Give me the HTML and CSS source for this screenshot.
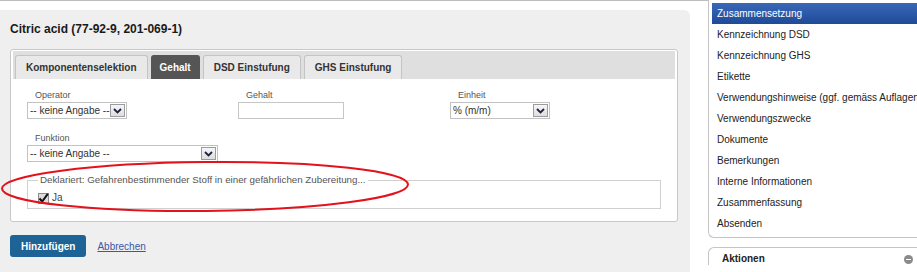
FILE: index.html
```html
<!DOCTYPE html>
<html lang="de">
<head>
  <meta charset="UTF-8">
  <title>Komponente bearbeiten</title>
  <link rel="stylesheet" href="styles.css">
</head>
<body>

  <div class="page">
    <div class="main">
      <div class="panel">
        <h1 class="title">Citric acid (77-92-9, 201-069-1)</h1>

        <div class="tabbox">
          <ul class="tabs">
            <li class="tab">Komponentenselektion</li>
            <li class="tab active">Gehalt</li>
            <li class="tab">DSD Einstufung</li>
            <li class="tab">GHS Einstufung</li>
          </ul>

          <div class="tab-content">
            <div class="fields">
              <div class="field">
                <label>Operator</label>
                <div class="select select-small">
                  <span class="select-text">-- keine Angabe --</span>
                  <span class="select-btn">
                    <svg width="9" height="6" viewBox="0 0 9 6"><path d="M1 1 L4.5 4.5 L8 1" fill="none" stroke="#1b2340" stroke-width="1.8"/></svg>
                  </span>
                </div>
              </div>
              <div class="field">
                <label>Gehalt</label>
                <input type="text" class="text-input">
              </div>
              <div class="field">
                <label>Einheit</label>
                <div class="select select-small">
                  <span class="select-text">% (m/m)</span>
                  <span class="select-btn">
                    <svg width="9" height="6" viewBox="0 0 9 6"><path d="M1 1 L4.5 4.5 L8 1" fill="none" stroke="#1b2340" stroke-width="1.8"/></svg>
                  </span>
                </div>
              </div>
            </div>

            <div class="field field-row">
              <label>Funktion</label>
              <div class="select select-wide">
                <span class="select-text">-- keine Angabe --</span>
                <span class="select-btn">
                  <svg width="9" height="6" viewBox="0 0 9 6"><path d="M1 1 L4.5 4.5 L8 1" fill="none" stroke="#1b2340" stroke-width="1.8"/></svg>
                </span>
              </div>
            </div>

            <fieldset class="declared">
              <legend>Deklariert: Gefahrenbestimmender Stoff in einer gefährlichen Zubereitung...</legend>
              <label class="check">
                <svg width="11" height="11" viewBox="0 0 11 11"><rect x="0.5" y="0.5" width="10" height="10" fill="#dcdcdc" stroke="#8a8a8a"/><path d="M1.5 5.5 L4.2 8.5 L9.8 0.8" fill="none" stroke="#111" stroke-width="2"/></svg>
                Ja
              </label>
            </fieldset>
          </div>
        </div>

        <div class="actions">
          <button class="btn-primary">Hinzufügen</button>
          <a href="#" class="link">Abbrechen</a>
        </div>
      </div>

      <!-- Markierung -->
      <svg class="annotation" width="420" height="60" viewBox="0 155 420 60">
        <ellipse cx="205" cy="185.5" rx="203" ry="24.5" fill="none" stroke="#e3121b" stroke-width="2" transform="rotate(-0.6 205 185.5)"/>
      </svg>
    </div>

    <div class="side">
      <ul class="nav">
        <li class="nav-item active">Zusammensetzung</li>
        <li class="nav-item">Kennzeichnung DSD</li>
        <li class="nav-item">Kennzeichnung GHS</li>
        <li class="nav-item">Etikette</li>
        <li class="nav-item">Verwendungshinweise (ggf. gemäss Auflagen)</li>
        <li class="nav-item">Verwendungszwecke</li>
        <li class="nav-item">Dokumente</li>
        <li class="nav-item">Bemerkungen</li>
        <li class="nav-item">Interne Informationen</li>
        <li class="nav-item">Zusammenfassung</li>
        <li class="nav-item">Absenden</li>
      </ul>

      <div class="box">
        <div class="box-head">
          <span>Aktionen</span>
          <span class="toggle"></span>
        </div>
      </div>
    </div>
  </div>

</body>
</html>
```

FILE: styles.css
```css
body {
  margin: 0;
  font-family: 'Liberation Sans', Arial, sans-serif;
  background-color: #fff;
  color: #222;
  width: 917px;
  height: 272px;
  overflow: hidden;
}

.page {
  display: flex;
  width: 1000px;
}

.main {
  position: relative;
  width: 708px;
  flex-shrink: 0;
  border-top: 1px solid #bdbdbd;
  padding-top: 9px;
}

.panel {
  width: 690px;
  box-sizing: border-box;
  background-color: #efefef;
  border-top-right-radius: 6px;
  padding: 12px 12px 20px 10px;
}

.title {
  margin: 0 0 13px 0;
  font-size: 12px;
  line-height: 14px;
  font-weight: bold;
  color: #1a1a1a;
}

.tabbox {
  background-color: #fff;
  border: 1px solid #c8c8c8;
  border-radius: 3px;
  padding: 1px 2px 2px 2px;
}

.tabs {
  list-style: none;
  margin: 0;
  padding: 4px 0 0 2px;
  height: 24px;
  background-color: #dfdfdf;
  display: flex;
  gap: 3px;
}

.tab {
  background-color: #e9e9e9;
  border: 1px solid #c4c4c4;
  border-bottom: none;
  border-radius: 3px 3px 0 0;
  padding: 0 10px;
  font-size: 10px;
  font-weight: bold;
  line-height: 23px;
  color: #333;
}

.tab.active {
  background-color: #555;
  border-color: #555;
  color: #fff;
  padding: 0 8px;
}

.tab-content {
  padding: 10px 14px 10px 14px;
}

.fields {
  display: grid;
  grid-template-columns: 211px 212px auto;
}

.field label {
  display: block;
  padding-left: 8px;
  font-size: 9px;
  line-height: 12px;
  color: #555;
  margin-bottom: 1px;
}

.field-row {
  margin-top: 13px;
}

.select {
  display: flex;
  align-items: center;
  justify-content: space-between;
  box-sizing: border-box;
  height: 17px;
  border: 1px solid #c2c2c2;
  background-color: #fff;
}

.select-small {
  width: 100px;
}

.select-wide {
  width: 191px;
}

.select-text {
  padding-left: 2px;
  font-size: 10px;
  color: #333;
  white-space: nowrap;
  overflow: hidden;
}

.select-btn {
  display: flex;
  align-items: center;
  justify-content: center;
  box-sizing: border-box;
  width: 15px;
  height: 13px;
  margin-right: 1px;
  border: 1px solid #9c9c9c;
  background: linear-gradient(#f6f6f6, #dedede);
  flex-shrink: 0;
}

.text-input {
  display: block;
  box-sizing: border-box;
  width: 106px;
  height: 17px;
  margin: 0;
  padding: 0;
  border: 1px solid #c6c6c6;
}

.declared {
  margin: 12px 0 0 0;
  padding: 6px 8px 4px 10px;
  border: 1px solid #d0d0d0;
}

.declared legend {
  padding: 0 2px;
  font-size: 9.75px;
  line-height: 12px;
  color: #555;
}

.check {
  display: flex;
  align-items: center;
  gap: 3px;
  font-size: 10px;
  color: #444;
  line-height: 12px;
}

.actions {
  display: flex;
  align-items: center;
  gap: 11px;
  margin-top: 13px;
}

.btn-primary {
  background-color: #1d6396;
  color: #fff;
  border: none;
  border-radius: 3px;
  height: 22px;
  padding: 0 11px;
  font-family: inherit;
  font-size: 10px;
  font-weight: bold;
  cursor: pointer;
}

.link {
  font-size: 10px;
  color: #3a58a6;
  text-decoration: underline;
}

.annotation {
  position: absolute;
  left: 0;
  top: 155px;
  pointer-events: none;
}

.side {
  width: 260px;
  flex-shrink: 0;
}

.nav {
  list-style: none;
  margin: 0;
  padding: 3px 0 3px 3px;
  border-left: 1px solid #c4c4c4;
  border-bottom: 1px solid #c4c4c4;
  border-bottom-left-radius: 6px;
}

.nav-item {
  padding-left: 5px;
  font-size: 10px;
  line-height: 21px;
  color: #222;
  white-space: nowrap;
}

.nav-item.active {
  background: linear-gradient(#3a68b8, #1e4a98);
  color: #fff;
}

.box {
  margin-top: 9px;
  border-left: 1px solid #c4c4c4;
  border-top: 1px solid #c4c4c4;
  border-top-left-radius: 6px;
}

.box-head {
  display: flex;
  align-items: center;
  justify-content: space-between;
  width: 204px;
  padding: 5px 0 0 13px;
  box-sizing: border-box;
  font-size: 10px;
  font-weight: bold;
  line-height: 12px;
}

.toggle {
  width: 9px;
  height: 9px;
  border-radius: 50%;
  background-color: #8a8a8a;
  position: relative;
}

.toggle::after {
  content: "";
  position: absolute;
  left: 2px;
  top: 4px;
  width: 5px;
  height: 1px;
  background-color: #fff;
}
```
